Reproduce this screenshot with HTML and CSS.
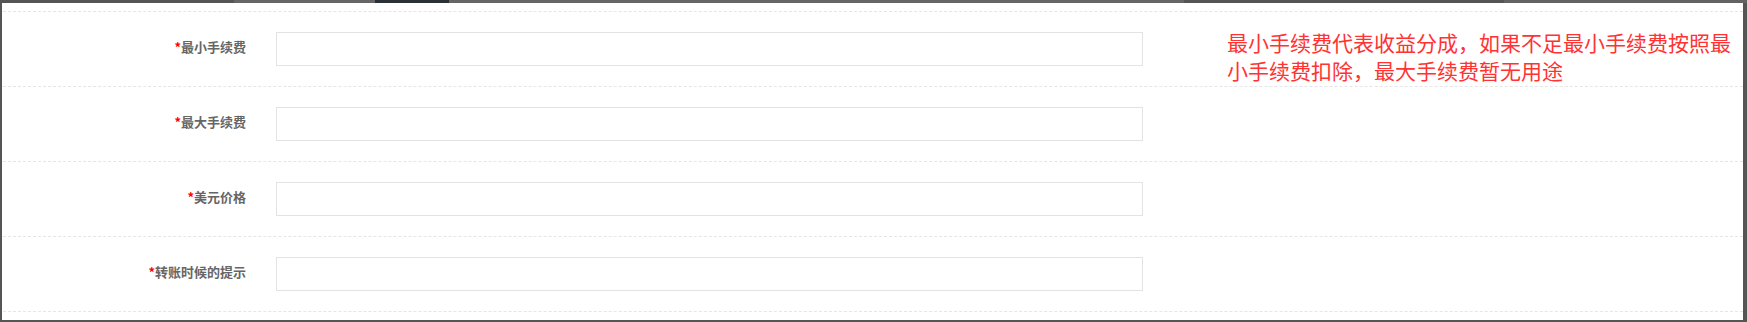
FILE: index.html
```html
<!DOCTYPE html>
<html lang="zh-CN">
<head>
    <meta charset="UTF-8">
    <meta name="viewport" content="width=device-width, initial-scale=1.0">
    <title>手续费设置</title>
    <link rel="stylesheet" href="styles.css">
</head>
<body>
    <div id="panel">
        <form class="feeForm">
            <div class="formRow">
                <label class="rowLabel"><span class="req">*</span>最小手续费</label>
                <input type="text" class="rowInput" name="min_fee">
                <div class="hint">最小手续费代表收益分成，如果不足最小手续费按照最小手续费扣除，最大手续费暂无用途</div>
            </div>
            <div class="formRow">
                <label class="rowLabel"><span class="req">*</span>最大手续费</label>
                <input type="text" class="rowInput" name="max_fee">
            </div>
            <div class="formRow">
                <label class="rowLabel"><span class="req">*</span>美元价格</label>
                <input type="text" class="rowInput" name="usd_price">
            </div>
            <div class="formRow">
                <label class="rowLabel"><span class="req">*</span>转账时候的提示</label>
                <input type="text" class="rowInput" name="transfer_tip">
            </div>
        </form>
    </div>
</body>
</html>
```

FILE: styles.css
```css
html, body {
    margin: 0;
    padding: 0;
}

body {
    height: 322px;
    overflow: hidden;
    font-family: "Noto Sans CJK SC", "Noto Sans", sans-serif;
    /* the frame behind the panel */
    background:
        linear-gradient(to right,
            #555555 0, #555555 234px,
            #666666 234px, #666666 375px,
            #2b2f36 375px, #2b2f36 449px,
            #666666 449px, #666666 1184px,
            #545454 1184px, #545454 1504px,
            #636363 1504px) top / 100% 3px no-repeat,
        #555555;
}

#panel {
    margin: 3px 4px 0 2px;
    height: 317px;
    background: #ffffff;
    padding-top: 8px;
    box-sizing: border-box;
    overflow: hidden;
}

.feeForm {
    margin: 0 0 0 1px;
    border-bottom: 1px dashed #e6e6e6;
}

.formRow {
    display: grid;
    grid-template-columns: 243px 867px 1fr;
    column-gap: 30px;
    align-items: start;
    height: 74px;
    border-top: 1px dashed #e6e6e6;
}

.rowLabel {
    text-align: right;
    font-size: 13px;
    font-weight: bold;
    color: #666666;
    line-height: 20px;
    padding-top: 25px;
}

.req {
    color: #ff0000;
}

.rowInput {
    margin: 20px 0 0 0;
    height: 34px;
    padding: 0 8px;
    box-sizing: border-box;
    border: 1px solid #e3e3e3;
    background: #ffffff;
    outline: none;
}

.hint {
    width: 512px;
    margin-left: 54px;
    padding-top: 16px;
    font-size: 21px;
    line-height: 28px;
    color: #ff3333;
}
```
